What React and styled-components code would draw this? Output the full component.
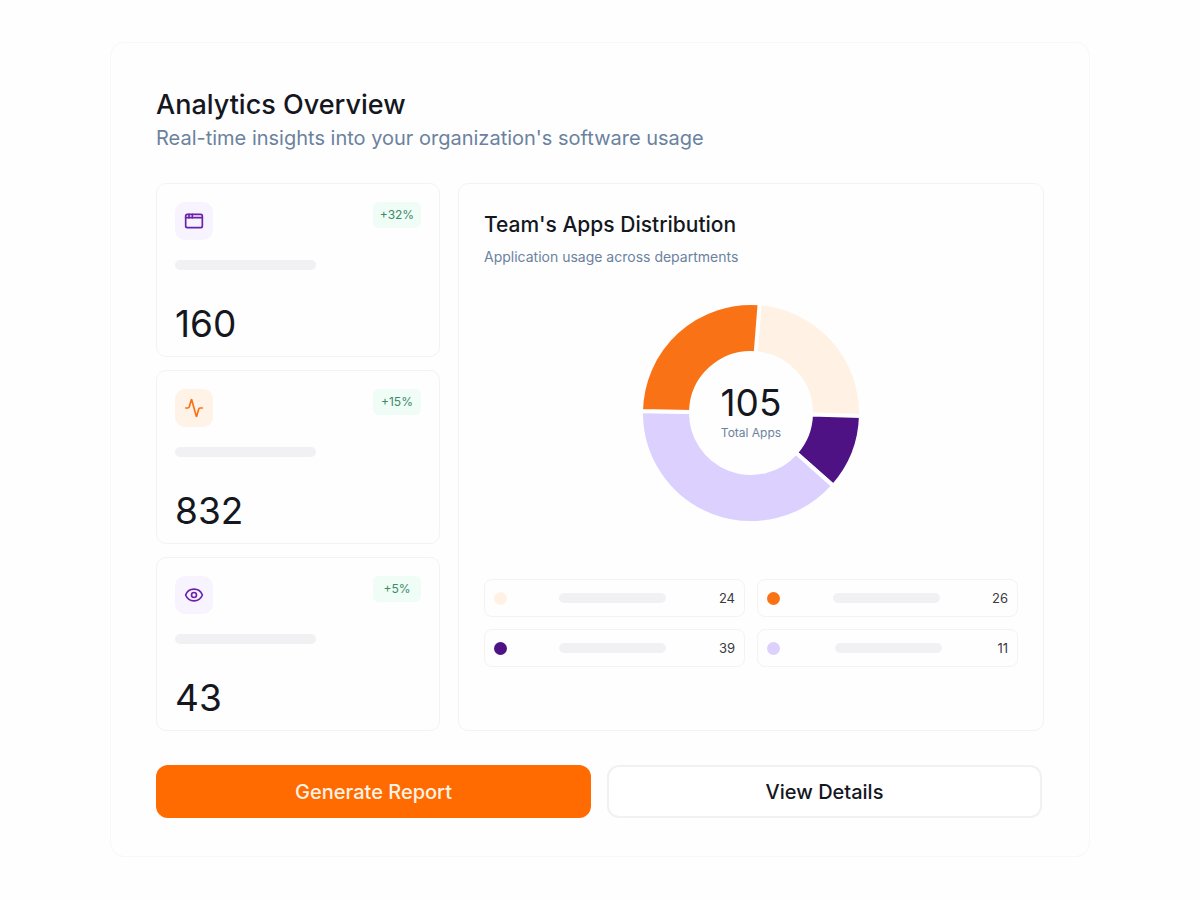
import React from "react"
import styled, { createGlobalStyle } from "styled-components"
import { Activity, AppWindow, Eye } from "lucide-react"

const colors = {
  ink: "#15171f",
  slate: "#6b829e",
  line: "#f3f3f5",
  skeleton: "#f1f1f4",
  orange: "#f97316",
  purple: "#4f1285",
  lavender: "#dcd0ff",
  cream: "#fff2e4",
}

const GlobalStyle = createGlobalStyle`
  * {
    box-sizing: border-box;
  }

  body {
    margin: 0;
    background: #fefefe;
    color: ${colors.ink};
    font-family: Inter, "Liberation Sans", sans-serif;
  }

  h1, h2, p {
    margin: 0;
  }
`

const Page = styled.main`
  max-width: 1400px;
  margin: 0 auto;
  padding: 42px 110px;

  @media only screen and (max-width: 900px) {
    padding: 24px;
  }
`

const Panel = styled.section`
  padding: 45px 45px 38px;
  border: 1px solid #f8f8f9;
  border-radius: 14px;
`

const Title = styled.h1`
  font-size: 27px;
  line-height: 34px;
  font-weight: 500;
`

const Subtitle = styled.p`
  font-size: 20px;
  line-height: 32px;
  color: ${colors.slate};
`

const Columns = styled.div`
  display: grid;
  grid-template-columns: 284fr 586fr;
  gap: 18px;
  margin-top: 29px;

  @media only screen and (max-width: 900px) {
    grid-template-columns: 1fr;
  }
`

const StatList = styled.div`
  display: flex;
  flex-direction: column;
  gap: 13px;
`

const Card = styled.article`
  border: 1px solid ${colors.line};
  border-radius: 10px;
`

const StatCard = styled(Card)`
  flex: 1;
  padding: 18px 18px 8px;
`

const StatTop = styled.div`
  display: flex;
  justify-content: space-between;
  align-items: flex-start;
`

const IconTile = styled.span`
  display: grid;
  place-items: center;
  width: 38px;
  height: 38px;
  border-radius: 10px;
  color: ${({ $color }) => $color};
  background: ${({ $background }) => $background};
`

const Badge = styled.span`
  min-width: 48px;
  padding: 0 6px;
  border-radius: 6px;
  background: #effdf6;
  color: #3b8a68;
  font-size: 12px;
  line-height: 26px;
  text-align: center;
`

const Skeleton = styled.span`
  display: block;
  width: ${({ $width }) => $width};
  height: 10px;
  border-radius: 5px;
  background: ${colors.skeleton};
`

const StatSkeleton = styled(Skeleton)`
  margin: 20px 0 30px;
`

const BigNumber = styled.p`
  font-size: 37px;
  line-height: 48px;
`

const ChartCard = styled(Card)`
  padding: 25px;
`

const ChartTitle = styled.h2`
  font-size: 21px;
  line-height: 32px;
  font-weight: 500;
`

const ChartSubtitle = styled.p`
  font-size: 14px;
  line-height: 32px;
  color: ${colors.slate};
`

const DonutBox = styled.div`
  position: relative;
  display: flex;
  justify-content: center;
  margin: 30px 0 56px;
`

const DonutLabel = styled.div`
  position: absolute;
  inset: 0;
  display: flex;
  flex-direction: column;
  align-items: center;
  justify-content: center;
  padding-bottom: 8px;
`

const DonutCaption = styled.p`
  font-size: 12px;
  line-height: 12px;
  color: ${colors.slate};
`

const Legend = styled.div`
  display: grid;
  grid-template-columns: 1fr 1fr;
  gap: 12px;
`

const LegendItem = styled.div`
  display: flex;
  align-items: center;
  justify-content: space-between;
  height: 38px;
  padding: 0 9px;
  border: 1px solid ${colors.line};
  border-radius: 8px;
  font-size: 13px;
  color: #3a3a3e;
`

const Dot = styled.span`
  width: 13px;
  height: 13px;
  border-radius: 50%;
  background: ${({ $color }) => $color};
`

const Actions = styled.div`
  display: grid;
  grid-template-columns: 1fr 1fr;
  gap: 16px;
  margin-top: 34px;
  padding-right: 2px;
`

const Button = styled.button`
  height: 53px;
  border: ${({ $primary }) => ($primary ? "0" : "2px solid #f1f1f1")};
  border-radius: 12px;
  background: ${({ $primary }) => ($primary ? "#ff6b00" : "#fff")};
  color: ${({ $primary }) => ($primary ? "#fff3e6" : colors.ink)};
  font-family: inherit;
  font-size: 20px;
  font-weight: 500;
  cursor: pointer;
`

const stats = [
  { value: 160, change: "+32%", icon: AppWindow, color: "#6b21a8", background: "#f7f3ff" },
  { value: 832, change: "+15%", icon: Activity, color: "#f97316", background: "#fff2e6" },
  { value: 43, change: "+5%", icon: Eye, color: "#6b21a8", background: "#f7f3ff" },
]

const legend = [
  { value: 24, color: colors.cream },
  { value: 26, color: colors.orange },
  { value: 39, color: colors.purple },
  { value: 11, color: colors.lavender },
]

// angles in degrees, clockwise from twelve o'clock
const slices = [
  { from: 4.5, to: 91.5, color: colors.cream },
  { from: 91.5, to: 131.5, color: colors.purple },
  { from: 131.5, to: 271, color: colors.lavender },
  { from: 271, to: 364.5, color: colors.orange },
]

const OUTER = 110
const INNER = 60

const point = (radius, angle) => {
  const rad = (angle * Math.PI) / 180
  return `${radius * Math.sin(rad)} ${-radius * Math.cos(rad)}`
}

const slicePath = ({ from, to }) =>
  `M${point(OUTER, from)} A${OUTER} ${OUTER} 0 0 1 ${point(OUTER, to)} ` +
  `L${point(INNER, to)} A${INNER} ${INNER} 0 0 0 ${point(INNER, from)} Z`

const Donut = () => (
  <DonutBox>
    <svg width="220" height="220" viewBox="-110 -110 220 220" aria-hidden="true">
      {slices.map(slice => (
        <path
          key={slice.from}
          d={slicePath(slice)}
          fill={slice.color}
          stroke="#fefefe"
          strokeWidth="4"
        />
      ))}
    </svg>
    <DonutLabel>
      <BigNumber>105</BigNumber>
      <DonutCaption>Total Apps</DonutCaption>
    </DonutLabel>
  </DonutBox>
)

const Stat = ({ value, change, icon: Icon, color, background }) => (
  <StatCard>
    <StatTop>
      <IconTile $color={color} $background={background}>
        <Icon size={20} strokeWidth={2} />
      </IconTile>
      <Badge>{change}</Badge>
    </StatTop>
    <StatSkeleton $width="141px" />
    <BigNumber>{value}</BigNumber>
  </StatCard>
)

export default function App() {
  return (
    <Page>
      <GlobalStyle />
      <Panel>
        <Title>Analytics Overview</Title>
        <Subtitle>Real-time insights into your organization's software usage</Subtitle>
        <Columns>
          <StatList>
            {stats.map(stat => (
              <Stat key={stat.value} {...stat} />
            ))}
          </StatList>
          <ChartCard>
            <ChartTitle>Team's Apps Distribution</ChartTitle>
            <ChartSubtitle>Application usage across departments</ChartSubtitle>
            <Donut />
            <Legend>
              {legend.map(({ value, color }) => (
                <LegendItem key={value}>
                  <Dot $color={color} />
                  <Skeleton $width="107px" />
                  <span>{value}</span>
                </LegendItem>
              ))}
            </Legend>
          </ChartCard>
        </Columns>
        <Actions>
          <Button type="button" $primary>
            Generate Report
          </Button>
          <Button type="button">View Details</Button>
        </Actions>
      </Panel>
    </Page>
  )
}
